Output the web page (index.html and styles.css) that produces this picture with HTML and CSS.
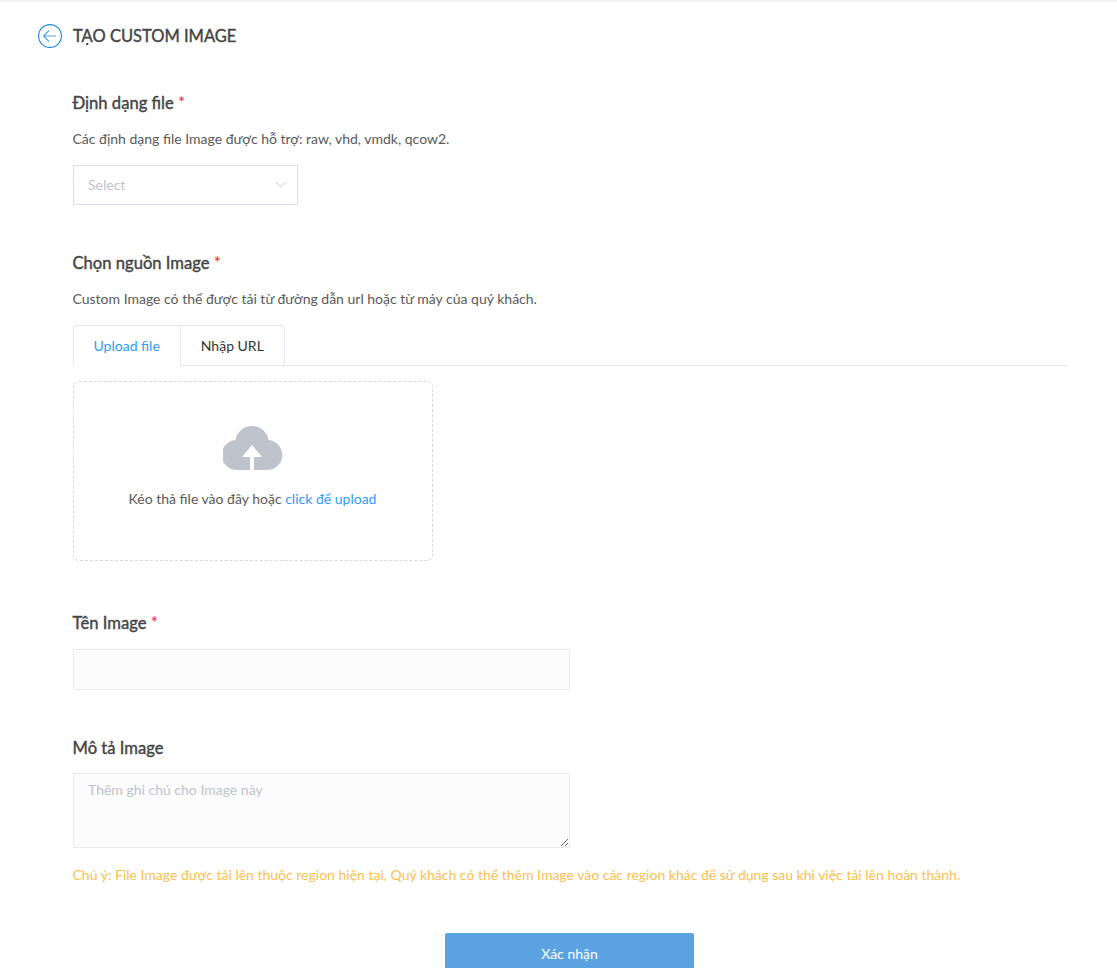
FILE: index.html
```html
<!DOCTYPE html>
<html lang="vi">
<head>
<meta charset="utf-8">
<title>Tạo Custom Image</title>
<link rel="stylesheet" href="styles.css">
</head>
<body>
<div class="topshadow"></div>
<header class="page-head">
  <svg class="back" width="24" height="24" viewBox="0 0 24 24" fill="none" stroke="#1e88d8"><circle cx="12" cy="12" r="11.4" stroke-width="1.1"/><path d="M18 12H5.500M11 6.500L5.500 12l5.500 5.500" stroke-width="1.2" stroke="#5aa2df"/></svg>
  <h1>TẠO CUSTOM IMAGE</h1>
</header>
<main class="form">
  <section class="format">
    <h2 class="label">Định dạng file <span class="req">*</span></h2>
    <p class="hint">Các định dạng file Image được hỗ trợ: raw, vhd, vmdk, qcow2.</p>
    <div class="select"><span>Select</span>
      <svg width="12" height="7" viewBox="0 0 12 7" fill="none" stroke="#c9ccd6"><path d="M1 .8l5 5 5-5"/></svg>
    </div>
  </section>
  <section class="source">
    <h2 class="label">Chọn nguồn Image <span class="req">*</span></h2>
    <p class="hint">Custom Image có thể được tải từ đường dẫn url hoặc từ máy của quý khách.</p>
    <div class="tabs">
      <div class="tab active">Upload file</div>
      <div class="tab">Nhập URL</div>
    </div>
    <div class="drop">
      <svg class="cloud" width="60" height="46" viewBox="0 0 60 46"><path fill="#bfc3cc" d="M15 46A15 15 0 0 1 12.500 16A16.700 16.700 0 0 1 45.500 16A15 15 0 0 1 43 46H31V33h8L29 21 19 33h8v13z"/></svg>
      <p>Kéo thả file vào đây hoặc <a href="#">click để upload</a></p>
    </div>
  </section>
  <section class="name">
    <h2 class="label">Tên Image <span class="req">*</span></h2>
    <input class="text-input" type="text">
  </section>
  <section class="desc">
    <h2 class="label">Mô tả Image</h2>
    <textarea class="area" placeholder="Thêm ghi chú cho Image này"></textarea>
    <p class="note">Chú ý: File Image được tải lên thuộc region hiện tại, Quý khách có thể thêm Image vào các region khác để sử dụng sau khi việc tải lên hoàn thành.</p>
  </section>
  <div class="actions"><button class="submit" type="button">Xác nhận</button></div>
</main>
</body>
</html>
```
FILE: styles.css
```css
* { box-sizing: border-box; }
html, body { margin: 0; height: 968px; overflow: hidden; background: #fff; }
body { font-family: Lato, "Noto Sans", sans-serif; font-size: 14px; color: #4a4a4a; position: relative; }
.topshadow { height: 3px; background: linear-gradient(#eceef0, #fff); }
.page-head { display: flex; align-items: center; gap: 11px; padding: 21px 0 0 38px; height: 45px; }
.back { display: block; flex: none; }
h1 { margin: 0; font-size: 16.500px; font-weight: 400; line-height: 24px; color: #444; -webkit-text-stroke: 0.4px #444; }
.form { padding: 43px 50px 0 72.5px; }
.label { margin: 0; font-size: 16.600px; font-weight: 400; line-height: 24px; color: #444; -webkit-text-stroke: 0.4px #444; }
.req { color: #f5222d; font-size: 16.600px; line-height: 16px; -webkit-text-stroke: 0; }
.hint { margin: 14px 0 0; font-size: 14px; line-height: 20px; color: #595959; }
.select { display: flex; justify-content: space-between; align-items: center; width: 225px; height: 40px; margin-top: 16px; padding: 0 10px 1px 14.500px; border: 1px solid #dcdfe8; color: #bfc3cc; }
.source { margin-top: 46px; }
.tabs { display: flex; height: 41px; margin-top: 16px; border-bottom: 1px solid #e4e7ed; }
.tab { height: 41px; padding: 10px 20px 0; line-height: 20px; color: #333; border: 1px solid #e4e7ed; border-left: 0; background: #fff; }
.tab:first-child { border-left: 1px solid #e4e7ed; border-radius: 4px 0 0 0; }
.tab:last-child { border-radius: 0 4px 0 0; }
.tab.active { color: #2e9df4; border-bottom-color: #fff; }
.drop { width: 360px; height: 180px; margin-top: 15px; border: 1px dashed #d9d9d9; border-radius: 6px; padding-top: 42px; text-align: center; }
.cloud { display: block; margin: 0 auto; }
.drop p { margin: 19px 0 0; line-height: 20px; color: #595959; }
.drop a { color: #2e9df4; text-decoration: none; }
.name { margin-top: 50px; }
.text-input { display: block; width: 497px; height: 41px; margin-top: 14px; border: 1px solid #eaeaea; border-radius: 2px; background: #fcfcfc; }
.desc { margin-top: 46px; }
.area { display: block; width: 497px; height: 75px; margin-top: 13px; padding: 6px 14.500px; border: 1px solid #eaeaea; background: #fcfcfc; font: 14px/20px Lato, sans-serif; resize: vertical; }
.area::placeholder { color: #bfc3cc; opacity: 1; }
.note { margin: 17px 0 0; line-height: 20px; color: #fcbf50; }
.actions { margin-top: 48px; padding-left: 372.500px; }
.submit { display: block; width: 249px; height: 45px; padding: 0 0 4px; border: 0; border-radius: 2px; background: #5aa3e0; color: #fff; font: 14px/20px Lato, sans-serif; }
```
